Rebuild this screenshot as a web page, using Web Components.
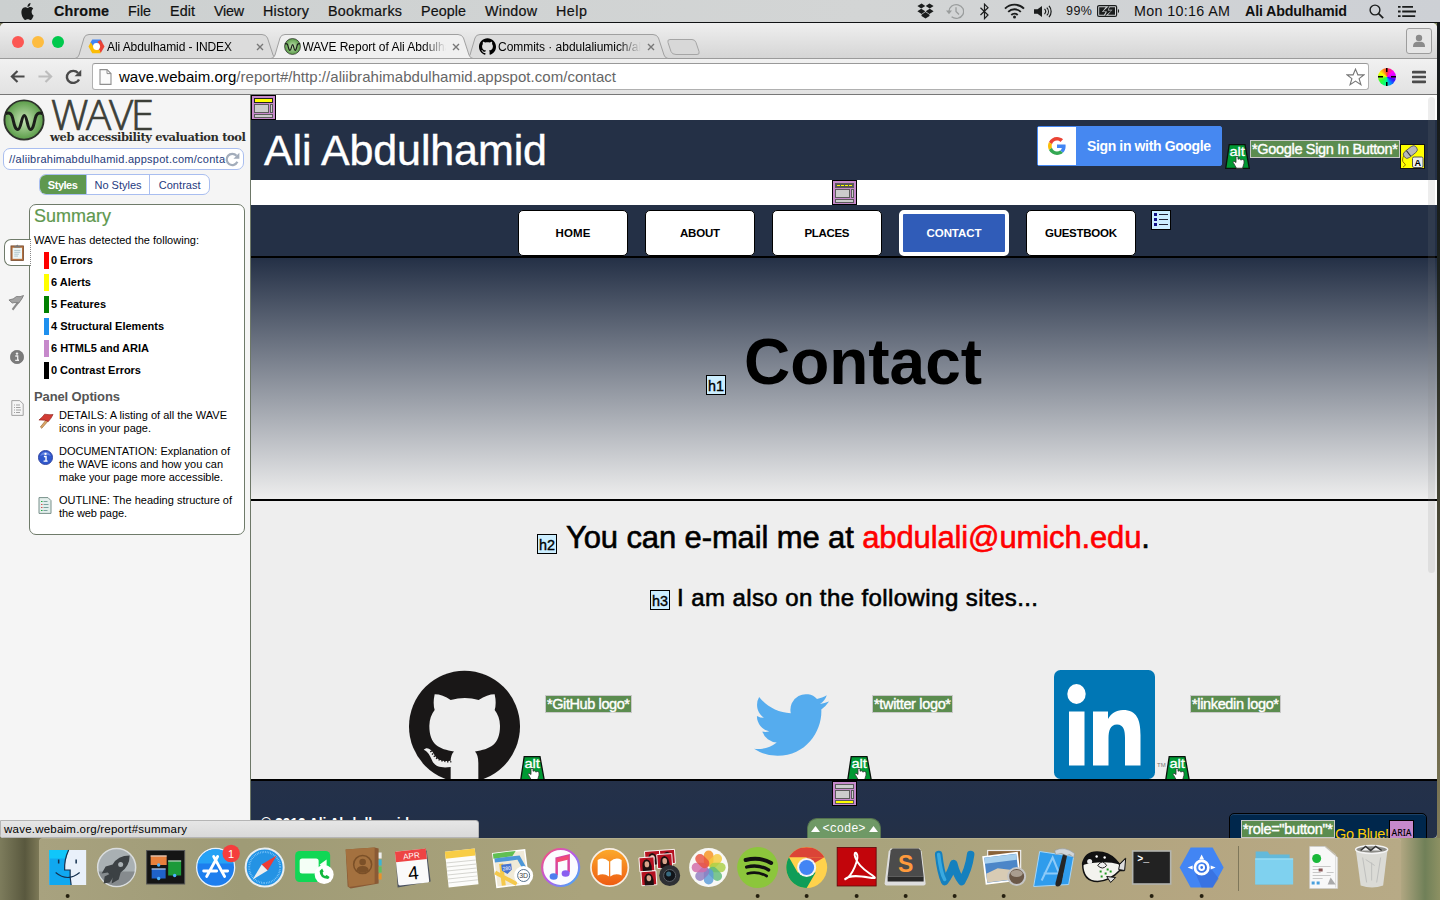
<!DOCTYPE html>
<html lang="en">
<head>
<meta charset="utf-8">
<title>WAVE Report of Ali Abdulhamid</title>
<style>
html,body{margin:0;padding:0;width:1440px;height:900px;overflow:hidden;font-family:"Liberation Sans",Arial,sans-serif}
</style>
</head>
<body>
<mac-desktop></mac-desktop>
<script>
const ICONS = {
apple:['0 0 24 24','<path fill="#1b1d1d" d="M12.152 6.896c-.948 0-2.415-1.078-3.96-1.04-2.04.027-3.91 1.183-4.961 3.014-2.117 3.675-.546 9.103 1.519 12.09 1.013 1.454 2.208 3.09 3.792 3.039 1.52-.065 2.09-.987 3.935-.987 1.831 0 2.35.987 3.96.948 1.637-.026 2.676-1.48 3.676-2.948 1.156-1.688 1.636-3.325 1.662-3.415-.039-.013-3.182-1.221-3.22-4.857-.026-3.04 2.48-4.494 2.597-4.559-1.429-2.09-3.623-2.324-4.39-2.376-2-.156-3.675 1.09-4.61 1.09zM15.53 3.83c.843-1.012 1.4-2.427 1.245-3.83-1.207.052-2.662.805-3.532 1.818-.78.896-1.454 2.338-1.273 3.714 1.338.104 2.715-.688 3.559-1.701"/>'],
dropbox:['0 0 17 16','<g fill="#1b1d1d"><path d="M4.6 .5 8.3 3 4.2 5.6.4 2.9zM12.4.5 8.7 3l4.1 2.6 3.8-2.7zM.4 8.2 4.2 5.7 8.3 8.3 4.6 10.9zM16.6 8.2 12.8 5.7 8.7 8.3l3.7 2.6zM4.5 11.7l4-2.6 4 2.6v1.2l-4 2.5-4-2.5z"/></g>'],
timemachine:['0 0 18 18','<g fill="none" stroke="#9a9d9d" stroke-width="1.3"><path d="M3 9a7.3 7.3 0 1 1 2.6 5.6"/><path d="M10 4.5V9l3 3.2"/></g><path d="M0 8h6l-3 4z" fill="#9a9d9d"/>'],
bluetooth:['0 0 11 17','<path d="M1.5 4.8 9 12 5.5 15.6V1.2L9 4.7 1.5 12" fill="none" stroke="#1b1d1d" stroke-width="1.2"/>'],
wifi:['0 0 21 16','<g fill="none" stroke="#1b1d1d" stroke-width="1.9"><path d="M1 5.6a13.4 13.4 0 0 1 19 0"/><path d="M4.2 8.9a8.9 8.9 0 0 1 12.6 0"/><path d="M7.3 12a4.5 4.5 0 0 1 6.4 0"/></g><circle cx="10.5" cy="14" r="1.5" fill="#1b1d1d"/>'],
sound:['0 0 18 14','<path d="M0 4.5h3.5L8 1v12L3.5 9.5H0z" fill="#1b1d1d"/><g fill="none" stroke="#1b1d1d" stroke-width="1.2"><path d="M10.5 4.3a4 4 0 0 1 0 5.4M12.8 2.7a6.5 6.5 0 0 1 0 8.6M15 1a9.5 9.5 0 0 1 0 12"/></g>'],
battery:['0 0 23 14','<rect x=".6" y="1.6" width="19" height="10.8" rx="1.5" fill="none" stroke="#1b1d1d" stroke-width="1.2"/><path d="M2.2 3.2h6.5L5 8h3.5L7 10.8H2.2zM18 10.8h-7l4.5-5h-4l1.3-2.6H18z" fill="#1b1d1d"/><path d="M12.5 1.5 6 7.4h4L7.5 12.6l7.3-6.1h-4z" fill="#1b1d1d"/><path d="M21 5v4c1.5-.5 1.5-3.5 0-4z" fill="#1b1d1d"/>'],
search:['0 0 15 15','<circle cx="6" cy="6" r="4.9" fill="none" stroke="#1b1d1d" stroke-width="1.4"/><path d="m9.6 9.6 4.6 4.6" stroke="#1b1d1d" stroke-width="1.7"/>'],
mlist:['0 0 18 12','<path d="M0 1h2.6M4.2 1H15M0 6h2.6M4.2 6H18M0 11h2.6M4.2 11h13" stroke="#1b1d1d" stroke-width="2"/>'],
gcloud:['0 0 18 18','<path d="M4.5 1.5h9l2 3.5h-4l-1 1h-3L4.5 9 2.5 5z" fill="#4285f4"/><path d="M13.5 2 17.5 9l-4 7-2.2-4 1.7-3-3-5z" fill="#ea4335"/><path d="M.5 9 3 4.5l2.3 4L9 12.5h3l1.5 3.7h-9z" fill="#fbbc05"/><circle cx="9" cy="9" r="3.6" fill="#fff"/>'],
wave:['0 0 42 42','<defs><radialGradient id="g"><stop offset="0" stop-color="#c5e3b4"/><stop offset="1" stop-color="#5a9c48"/></radialGradient></defs><circle cx="21" cy="21" r="19.6" fill="url(#g)" stroke="#2e322c" stroke-width="1.9"/><path d="M2.6 14.5c4.8-1.5 6.2 1 7.2 5 1.2 5 2.2 11 5 11 3.3 0 3.7-14 6.5-14s3 14 6.2 14c2.6 0 3.5-6 4.7-11 1-4 2.6-6.5 7.2-5" fill="none" stroke="#1b1e1a" stroke-width="3"/>'],
octo:['0 0 24 24','<path d="M12 .297c-6.63 0-12 5.373-12 12 0 5.303 3.438 9.8 8.205 11.385.6.113.82-.258.82-.577 0-.285-.01-1.04-.015-2.04-3.338.724-4.042-1.61-4.042-1.61C4.422 18.07 3.633 17.7 3.633 17.7c-1.087-.744.084-.729.084-.729 1.205.084 1.838 1.236 1.838 1.236 1.07 1.835 2.809 1.305 3.495.998.108-.776.417-1.305.76-1.605-2.665-.3-5.466-1.332-5.466-5.93 0-1.31.465-2.38 1.235-3.22-.135-.303-.54-1.523.105-3.176 0 0 1.005-.322 3.3 1.23.96-.267 1.98-.399 3-.405 1.02.006 2.04.138 3 .405 2.28-1.552 3.285-1.23 3.285-1.23.645 1.653.24 2.873.12 3.176.765.84 1.23 1.91 1.23 3.22 0 4.61-2.805 5.625-5.475 5.92.42.36.81 1.096.81 2.22 0 1.606-.015 2.896-.015 3.286 0 .315.21.69.825.57C20.565 22.092 24 17.592 24 12.297c0-6.627-5.373-12-12-12"/>'],
close:['0 0 8 8','<path d="m1 1 6 6M7 1 1 7" stroke="#777" stroke-width="1.4"/>'],
user:['0 0 26 26','<rect x=".5" y=".5" width="25" height="25" rx="2.5" fill="#e6e6e6" stroke="#9d9d9d"/><circle cx="13" cy="10" r="3.2" fill="#8b8b8b"/><path d="M7 19c0-5 3-5.2 6-5.2s6 .2 6 5.2z" fill="#8b8b8b"/>'],
back:['0 0 16 14','<path d="M8 1 2 7l6 6M2 7h13.5" fill="none" stroke="#4a4a4a" stroke-width="2.3"/>'],
fwd:['0 0 16 14','<path d="m8 1 6 6-6 6M14 7H.5" fill="none" stroke="#bdbdbd" stroke-width="2.3"/>'],
reload:['0 0 16 16','<path d="M13.2 10.5A6 6 0 1 1 12.3 4" fill="none" stroke="#4a4a4a" stroke-width="2.3"/><path d="M15.3.8v6.4H9z" fill="#4a4a4a"/>'],
refresh:['0 0 16 16','<path d="M13.2 10.5A6 6 0 1 1 12.3 4" fill="none" stroke="#a3adbb" stroke-width="2.4"/><path d="M15.3.8v6.4H9z" fill="#a3adbb"/>'],
doc:['0 0 13 16','<path d="M1 .6h7l4 4v10.8H1z" fill="#fbfbfb" stroke="#8f8f8f" stroke-width="1.1"/><path d="M8 .6v4h4" fill="none" stroke="#8f8f8f"/>'],
star:['0 0 20 19','<path d="m10 1.2 2.5 6h6.3l-5 4 1.9 6.4L10 13.8l-5.7 3.8 1.9-6.4-5-4h6.3z" fill="#fff" stroke="#777" stroke-width="1.2"/>'],
burger:['0 0 14 14','<path d="M1 2.2h12M1 7h12M1 11.8h12" stroke="#4b4b4b" stroke-width="2.7" stroke-linecap="round"/>'],
clip:['0 0 16 18','<rect x="1" y="2" width="13.5" height="15.5" fill="#b5713f" stroke="#70452a" stroke-width=".8"/><rect x="2.8" y="4" width="10" height="11.7" fill="#edf6f6"/><path d="M4.5 3.8V2h2L7.7.4 9 2h2v1.8z" fill="#777"/><path d="M4.5 6.8h6.5M4.5 8.8h6.5M4.5 10.8h5M4.5 12.8h4" stroke="#a9bfc4" stroke-width=".9"/>'],
flagG:['0 0 17 16','<path d="m10 6.500-6 7.500 1.600 1.400 6.500-8z" fill="#8c8c8c"/><path d="M1 5Q6 4.500 9 1.500q4 .8 7.500-1-1.500 3.500-5 7.500Q7 7 4.500 8z" fill="#a3a3a3" stroke="#6f6f6f" stroke-width=".8"/>'],
flagR:['0 0 17 16','<path d="m8.500 7-6 7 1.500 1.300 6.500-7z" fill="#dca96a" stroke="#8f5a25" stroke-width=".6"/><path d="M1 7Q5 4 7 1.200q5 .8 9 .3-2 4-5 7Q8 6.500 1 7z" fill="#d23c34" stroke="#962720" stroke-width=".7"/>'],
infoG:['0 0 14 14','<circle cx="7" cy="7" r="6.700" fill="#7b7b7b" stroke="#666" stroke-width=".6"/><path d="M5.300 6h2.400v4.200H9M5.200 10.400H9" stroke="#eee" stroke-width="1.300" fill="none"/><circle cx="7" cy="3.600" r="1.200" fill="#eee"/>'],
infoB:['0 0 14 14','<circle cx="7" cy="7" r="6.600" fill="#2f58cc" stroke="#2c3d9a" stroke-width=".8"/><path d="M2 5.500a5.300 5.300 0 0 1 10 0Q7 3.500 2 5.500z" fill="#7d9aee" opacity=".7"/><path d="M5.500 6h2v4.200M5.200 10.400H9" stroke="#fff" stroke-width="1.300" fill="none"/><circle cx="7" cy="3.600" r="1.100" fill="#fff"/>'],
outG:['0 0 13 16','<path d="M.8.600h8l3.400 3.400v11.400H.8z" fill="#f5f5f5" stroke="#999" stroke-width=".9"/><path d="M3 5h1M5 5h4M3 7.500h1M5 7.500h4.500M3 10h1M5 10h5M3 12.500h1M5 12.500h4" stroke="#999" stroke-width=".9"/>'],
outC:['0 0 14 17','<path d="M1 .600h9l3 3v12.800H1z" fill="#e4efec" stroke="#78908b" stroke-width="1"/><path d="M5.500 4.500h4M5.500 7.500h5M5.500 10.500h5M5.500 13.500h4" stroke="#7ba39f"/><path d="M3 4.500h1.500M3 13.500h1.500" stroke="#1faa3a"/><path d="M3 7.500h1.500M3 10.500h1.500" stroke="#d85050"/>'],
google:['0 0 48 48','<path fill="#EA4335" d="M24 9.500c3.540 0 6.710 1.220 9.210 3.600l6.850-6.850C35.900 2.380 30.470 0 24 0 14.620 0 6.510 5.380 2.560 13.220l7.980 6.190C12.430 13.720 17.740 9.500 24 9.500z"/><path fill="#4285F4" d="M46.980 24.550c0-1.570-.15-3.090-.38-4.550H24v9.020h12.940c-.58 2.960-2.260 5.480-4.780 7.180l7.730 6c4.510-4.180 7.090-10.360 7.090-17.650z"/><path fill="#FBBC05" d="M10.530 28.590c-.48-1.450-.76-2.990-.76-4.590s.27-3.140.76-4.590l-7.980-6.190C.92 16.460 0 20.120 0 24c0 3.880.92 7.540 2.560 10.780l7.970-6.190z"/><path fill="#34A853" d="M24 48c6.480 0 11.930-2.130 15.890-5.810l-7.730-6c-2.150 1.450-4.920 2.300-8.160 2.300-6.260 0-11.570-4.220-13.470-9.910l-7.980 6.190C6.510 42.620 14.620 48 24 48z"/>'],
alt:['0 0 25 25','<path d="M4.200.7h15.800l4.300 23.600H.7z" fill="#009933" stroke="#0a120c" stroke-width="1.300"/><text x="12.200" y="12" font-size="13" text-anchor="middle" fill="#fff" stroke="#fff" stroke-width=".3" textLength="15.500" lengthAdjust="spacingAndGlyphs">alt</text><path d="M11 12.500v6l-2-1.300-1 1 3.500 6h6l1.500-5v-3l-1.500-.7-1.600.5-1.400-1.200-1.500.4V12.500z" fill="#fff" stroke="#333" stroke-width=".8"/>'],
mouse:['0 0 25 25','<rect x=".5" y=".5" width="24" height="24" fill="#ff0" stroke="#111"/><path d="M4 11Q1 17 4 19t-1 4" fill="none" stroke="#987b00" stroke-width="1"/><g transform="rotate(-38 10 8)"><rect x="2.500" y="4.500" width="15.500" height="7.500" rx="3.700" fill="#b9b9b9" stroke="#555" stroke-width=".8"/><path d="M8 4.700v7" stroke="#333"/></g><rect x="12.500" y="13" width="10.500" height="10.500" rx="1.500" fill="#eee" stroke="#555"/><text x="17.800" y="21.600" font-size="9" font-weight="700" text-anchor="middle">A</text>'],
head:['0 0 25 25','<rect x=".5" y=".5" width="24" height="24" fill="#c689cb" stroke="#000"/><g fill="#ccc" stroke="#5b5b5b"><rect x="3.500" y="3.500" width="18" height="4" fill="#ff0" stroke="#222"/><rect x="3.500" y="9.500" width="14" height="8"/><rect x="19.500" y="9.500" width="2" height="8"/><rect x="3.500" y="19.500" width="18" height="3"/></g>'],
navi:['0 0 25 25','<rect x=".5" y=".5" width="24" height="24" fill="#c689cb" stroke="#000"/><g fill="#ccc" stroke="#5b5b5b"><rect x="3.500" y="3.500" width="18" height="4" fill="#555"/><path d="M5 5.500h15" stroke="#ff0" stroke-dasharray="3 1"/><rect x="3.500" y="9.500" width="14" height="8"/><rect x="19.500" y="9.500" width="2" height="8"/><rect x="3.500" y="19.500" width="18" height="3"/></g>'],
foot:['0 0 25 25','<rect x=".5" y=".5" width="24" height="24" fill="#c689cb" stroke="#000"/><g fill="#ccc" stroke="#5b5b5b"><rect x="3.500" y="3.500" width="18" height="4"/><rect x="3.500" y="9.500" width="14" height="8"/><rect x="19.500" y="9.500" width="2" height="8"/><rect x="3.500" y="19.500" width="18" height="3" fill="#ff0"/></g>'],
ulist:['0 0 20 20','<rect x=".5" y=".5" width="19" height="19" fill="#cef" stroke="#000"/><path d="M3 4.500h3M3 9.500h3M3 14.500h3" stroke="#118" stroke-width="3"/><path d="M8 4.500h9M8 9.500h9M8 14.500h9" stroke="#223"/>'],
github:['27 60 333 328','<ellipse cx="193.500" cy="230" rx="166.500" ry="168" fill="#191717"/><path fill="#eee" d="M104 133Q128 133 152 150Q195 139 236 150Q262 133 284 133Q290 160 284 180Q300 200 300 228C300 285 270 299 225 305Q235 315 235 340V400H152V352C125 355 108 352 98 336C90 318 84 305 71 300C80 290 94 296 103 315C112 332 130 336 152 333Q152 315 162 305C118 299 88 285 88 228Q88 200 104 180Q98 160 104 133z"/><path d="M92 303c12 23 26 33 62 33" fill="none" stroke="#191717" stroke-width="5" stroke-dasharray="4 5"/>'],
twitter:['0 2.200 24 19.600','<path fill="#55acee" d="M23.953 4.570a10 10 0 01-2.825.775 4.958 4.958 0 002.163-2.723c-.951.555-2.005.959-3.127 1.184a4.920 4.920 0 00-8.384 4.482C7.690 8.095 4.067 6.130 1.640 3.162a4.822 4.822 0 00-.666 2.475c0 1.710.87 3.213 2.188 4.096a4.904 4.904 0 01-2.228-.616v.060a4.923 4.923 0 003.946 4.827 4.996 4.996 0 01-2.212.085 4.936 4.936 0 004.604 3.417 9.867 9.867 0 01-6.102 2.105c-.39 0-.779-.023-1.170-.067a13.995 13.995 0 007.557 2.209c9.053 0 13.998-7.496 13.998-13.985 0-.21 0-.42-.015-.63A9.935 9.935 0 0024 4.590z"/>'],
linkedin:['0 0 101 109','<rect width="101" height="109" rx="6.500" fill="#0077b5"/><g fill="#fff"><ellipse cx="22.500" cy="24" rx="9.200" ry="10"/><rect x="15" y="41.500" width="15.500" height="54"/><path d="M39 41.500h15v7.500c3-5.500 8-9 15-9 14 0 17.500 10 17.500 25v30.500H71V68c0-7-1-13.500-8-13.500S54.500 61 54.500 68v27.500H39z"/></g>'],
aria:['0 0 25 25','<rect x=".5" y=".5" width="24" height="24" fill="#c689cb" stroke="#000"/><text x="12.500" y="16" font-family="Noto Sans" font-size="9.500" font-weight="500" text-anchor="middle" textLength="20" lengthAdjust="spacingAndGlyphs">ARIA</text>'],
tri:['0 0 9 7','<path d="M4.500 0 9 7H0z" fill="#fff"/>'],
};
['h1','h2','h3'].forEach(h=>ICONS[h]=['0 0 20 20',`<rect x=".5" y=".5" width="19" height="19" fill="#cef" stroke="#000"/><text x="10" y="16" font-size="15.500" text-anchor="middle" textLength="16" lengthAdjust="spacingAndGlyphs" stroke="#000" stroke-width=".4">${h}</text>`]);

/* Dock tiles are drawn round their own centre. */
const petals=['#f7931e','#f5c93a','#a9cf46','#5fb97a','#5a9bd8','#8f7cc0','#d16aa8','#e8523f'].map((c,i)=>`<rect x="-4.800" y="-17" width="9.600" height="16" rx="4.800" fill="${c}" opacity=".82" transform="rotate(${i*45})"/>`).join('');
const photo=(x,y)=>`<rect x="${x}" y="${y}" width="15" height="14" fill="#b51220" stroke="#fff" stroke-width=".9"/><path d="M${x+3} ${y+14}q-1-12 4.500-12 5.500 1 4.500 12z" fill="#1c1010"/><ellipse cx="${x+7.500}" cy="${y+7}" rx="2.300" ry="3" fill="#d9a58c"/>`;
const DOCK = {
finder:'<rect x="-18.500" y="-17.500" width="37" height="35" fill="#e9f0fa"/><path d="M-18.500-17.500H1Q-3.500-8-3 2.500H2.500Q2 9 3.500 17.500h-22z" fill="#10a8f0"/><path d="M-18.500-17.500H1L-1.500-9h-17z" fill="#10c6fa"/><path d="M-9-8v4M8.500-8v4" stroke="#15304f" stroke-width="1.500"/><path d="M-12 5Q0 15 12 5M1-17.500Q-3.500-8-3 2.500H2.500Q2 9 3.500 17.500" fill="none" stroke="#15304f" stroke-width="1.200"/>',
launch:'<circle r="19" fill="#a9b0b3" stroke="#dadddd" stroke-width="1.500"/><path d="M-18 4A18.500 18.500 0 0 0 18 4z" fill="#868b8e"/><path d="M13-12Q1-12-4-3l-7 2-4 7 6-1 5 5-1 6 7-4 2-7Q13-1 13-12z" fill="#3c4144"/><circle cx="4" cy="-3" r="2.500" fill="#a9b0b3"/><path d="m-6 6-6 3-1 7 6-1 4-6z" fill="#3c4144"/>',
mission:'<rect x="-19" y="-17" width="38" height="33.500" fill="#151515" stroke="#555"/><rect x="-15" y="-12" width="16" height="9.500" fill="#e8803c"/><rect x="2.500" y="-7" width="13" height="15" fill="#1c9a39"/><rect x="-14" y="1" width="14" height="10" fill="#1f62c9"/><path d="M-15-11.500H1M2.500-6.500h13M-14 1.500H0" stroke="#ddd"/><circle cx="-7" cy="-2.500" r="1.700" fill="#4cb3ff"/><circle cx="9" cy="8" r="1.700" fill="#4cb3ff"/><circle cx="-7" cy="11" r="1.700" fill="#4cb3ff"/>',
store:'<circle r="19" fill="#1d7eee" stroke="#e8f2fb" stroke-width="1.300"/><path d="M-18-4A18.500 18.500 0 0 1 18-4z" fill="#25a2f5"/><g stroke="#fff" stroke-width="2.800" stroke-linecap="round"><path d="m2-11-11 20M-2-11 9 9M-12 3.500H1M8 3.500h4"/></g><circle cx="15.500" cy="-14" r="8.700" fill="#f53d3d"/><text x="15.500" y="-9.800" font-size="11" fill="#fff" text-anchor="middle">1</text>',
safari:'<circle r="19" fill="#2493e4" stroke="#e9eef0" stroke-width="2"/><circle r="15.500" fill="none" stroke="#8fd0ff" stroke-width="2" stroke-dasharray=".6 1.100"/><path d="m12-12-15 9 6 6z" fill="#ee3b35"/><path d="m-12 12 9-15 6 6z" fill="#eee"/>',
facetime:'<rect x="-18.500" y="-16.500" width="35" height="31" rx="4.500" fill="#10d755"/><rect x="-14" y="-9" width="19" height="15" rx="2.500" fill="#f4fff6"/><path d="m6-3 7-5V5z" fill="#f4fff6"/><circle cx="10.500" cy="7" r="9.500" fill="#fff"/><path d="M6 3.500q0 7.500 8.500 8l1.500-2-3-2-1.500 1Q9 7.500 9 5l1-1-1.500-3z" fill="#10b83c"/>',
contacts:'<path d="m-18-18 29-2 4 1v35l-28 5-3-2z" fill="#8a5a35"/><path d="m-18-18 29-2v36l-26 3.500z" fill="#a4713f"/><path d="M15-15h3v6h-3z" fill="#eee"/><path d="M15-8h3v6h-3z" fill="#3ab5d8"/><path d="M15-1h3v6h-3z" fill="#60c060"/><path d="M15 6h3v6h-3z" fill="#e8932c"/><circle cx="-1" cy="-3" r="9" fill="none" stroke="#7b5028" stroke-width="1.500"/><circle cx="-1" cy="-5.500" r="3.300" fill="#7b5028"/><path d="M-7 3q0-4.500 6-4.500T5 3q-6 4.500-12 0z" fill="#7b5028"/>',
calendar:'<path d="m-17-12 31-5 4 31-33 6z" fill="#4b5260"/><g transform="rotate(-6)"><rect x="-16" y="-17.500" width="31" height="34" rx="1.500" fill="#fafafa"/><path d="M-16-17.500h31V-7h-31z" fill="#ee4444"/><text y="-9" font-size="8" fill="#fff" text-anchor="middle">APR</text><text y="12" font-size="19" text-anchor="middle">4</text></g>',
notes:'<g transform="rotate(-6)"><rect x="-15" y="-17.500" width="30" height="36" fill="#fcfcfa"/><path d="M-15-17.500h30v7h-30z" fill="#f8cd45"/><path d="M-15-6h30M-15-2h30M-15 2h30M-15 6h30M-15 10h30M-15 14h30" stroke="#d5d5d0"/></g>',
maps:'<g transform="rotate(-7)"><rect x="-17" y="-16" width="32" height="34" fill="#f0ead8" stroke="#fff" stroke-width="1.500"/><path d="M-17-16h23l-4 5h-19z" fill="#60bf52"/><path d="M-16-9H8l5 12" fill="none" stroke="#4c97d8" stroke-width="4"/><path d="M-17 3 3 17M-10-5v22" stroke="#f5c94c" stroke-width="4"/><path d="M-10-4H0v6l-5 4-5-4z" fill="#4774cf"/><text x="-5" y="2" font-size="5" fill="#fff" text-anchor="middle">280</text></g><circle cx="12" cy="8" r="9.500" fill="#fff"/><circle cx="12" cy="8" r="6" fill="none" stroke="#58728c"/><text x="12" y="10.500" font-size="7" text-anchor="middle" fill="#444">3D</text>',
itunes:'<defs><linearGradient id="r" x2="1" y2="1"><stop stop-color="#ff4f6e"/><stop offset=".5" stop-color="#b65bea"/><stop offset="1" stop-color="#34b6f7"/></linearGradient></defs><circle r="18.500" fill="#fbfbff" stroke="url(#r)" stroke-width="2.200"/><path d="M-4 8V-9l12-3V5" fill="none" stroke="#d8459f" stroke-width="2.500"/><path d="m-4-9 12-3v4L-4-5z" fill="#f24a77"/><ellipse cx="-7" cy="9" rx="4" ry="3.300" fill="#4e7dee"/><ellipse cx="5" cy="6" rx="4" ry="3.300" fill="#8a5ef0"/>',
ibooks:'<defs><linearGradient id="b" x2="0" y2="1"><stop stop-color="#fcab2c"/><stop offset="1" stop-color="#ee5a12"/></linearGradient></defs><circle r="18.700" fill="url(#b)" stroke="#f7efe6" stroke-width="1.700"/><path d="M-.6-6Q-6-11-12-7.500V8Q-6 5-.6 9zM.6-6Q6-11 12-7.500V8Q6 5 .6 9z" fill="#fff"/>',
booth:`<g transform="rotate(-4)">${photo(-13,-17)}${photo(2,-17)}${photo(-19,-11)}${photo(-1,-13)}${photo(-18,3)}</g><circle cx="11" cy="8" r="10.500" fill="#2e3034"/><circle cx="11" cy="8" r="6" fill="#12151a" stroke="#5a5f66"/><circle cx="10" cy="6.500" r="2.500" fill="#386a80"/>`,
photos:`<circle r="19.500" fill="#f8f8f6"/>${petals}`,
spotify:'<circle r="20.500" fill="#8cc63c"/><g fill="none" stroke="#111" stroke-linecap="round"><path d="M-12-7.500Q2-11 13.500-4.500" stroke-width="4"/><path d="M-11-.5Q1-3.500 11 2.500" stroke-width="3.300"/><path d="M-10 6Q0 3.500 9 8.500" stroke-width="2.700"/></g>',
chrome:'<circle r="20.500" fill="#ffd24c"/><path d="M-17.700-10.200A20.500 20.500 0 0 1 17.700-10.200H0z" fill="#db4437"/><path d="M-17.700-10.200A20.500 20.500 0 0 0 0 20.500L9 5-9 5z" fill="#0f9d58"/><path d="M17.700-10.200H0V0z" fill="#db4437"/><circle r="9.500" fill="#f3f3f3"/><circle r="7.500" fill="#4285f4"/>',
acrobat:'<rect x="-19.500" y="-20" width="39" height="38.500" fill="#c2050b" stroke="#5d0508" stroke-width=".8"/><path d="M-12 12C-4 9 3-10 0-14S-5-6 13 6s-16-4-25 6z" fill="none" stroke="#fff" stroke-width="2"/>',
sublime:'<path d="m-17-16 2-3h29l2 3 4 32q0 2-2 2h-37q-2 0-2-2z" fill="#dedede"/><path d="m-15-17 2-2h26l2 2 3 26h-36z" fill="#4b4b4b"/><path d="M-18 9h36v5h-36z" fill="#292929"/><text y="4" font-size="23" font-weight="700" fill="#ff9a3c" text-anchor="middle">S</text>',
word:'<path d="M-16-13Q-14 5-10 14 -5 8-1-4 2 8 7 14 14 2 16-13" fill="none" stroke="#1580be" stroke-width="7.500" stroke-linejoin="round" stroke-linecap="round"/><path d="M-16-13Q-14 5-10 12" fill="none" stroke="#3aa9e0" stroke-width="3.500" stroke-linecap="round"/>',
preview:'<rect x="-16" y="-17" width="33" height="28" fill="#8a6238" stroke="#eee" stroke-width="1.200"/><g transform="rotate(-7)"><rect x="-19" y="-13" width="34" height="27" fill="#4c86c8" stroke="#fff" stroke-width="1.800"/><path d="M-18-12h32v6h-32z" fill="#a8d0ee"/><path d="m-18 4 12-4 20 5v8h-32z" fill="#d8cbb4"/></g><circle cx="13" cy="9" r="8.500" fill="#6b5848" stroke="#c5c5c5" stroke-width="2"/><ellipse cx="13" cy="6" rx="6" ry="3.500" fill="#a99d90"/>',
xcode:'<path d="m-14-16 34 5-5 28-35 2z" fill="#2f9cec" stroke="#a4d6fa"/><path d="m-12 13 11-23L8 12M-10 6H10" fill="none" stroke="#8dcaf8" stroke-width="2"/><path d="m10-16-8 31q-1 4 2 4t4-4l6-30z" fill="#252525"/><path d="M1-17q10-5 20 3l-1 4-4-3-3 1-5-2-6 1z" fill="#d0d5d9" stroke="#8d9498" stroke-width=".6"/>',
fish:'<path d="M-20-4Q-17-18 0-15 10-13 17-3l5-5-1 11-4 0Q8 13-5 14-20 14-20-4z" fill="#f3f3ee" stroke="#111" stroke-width="1.500"/><path d="M-20-4Q-17-18 0-15 10-13 17-3 7-6-5-5T-20-2z" fill="#111"/><path d="m4 9 9 1-5 5zM17-3l6-6-1 12-6-1z" fill="#ddd" stroke="#111"/><circle cx="-13" cy="-6" r="2.500" fill="#eee"/><path d="M-5-2q5-7 9 0-4 5-9 0z" fill="#eee" stroke="#222"/><circle cx="2" cy="-10" r="1.200" fill="#fff"/><circle cx="-6" cy="-11" r="1.200" fill="#fff"/><path d="M-3 4h2M2 6h2M4 2h2M-2 9h2M7 4h2" stroke="#292" stroke-width="2"/>',
term:'<rect x="-19" y="-16.500" width="38" height="33" fill="#222" stroke="#b3b5b0" stroke-width="1.600"/><text x="-14.500" y="-5.500" font-family="Liberation Mono" font-size="10" font-weight="700" fill="#fff">&gt;_</text>',
gce:'<path d="M-11-20h22L22 0 11 20h-22L-22 0z" fill="#4285f4"/><path d="m4-6 13 17-6 9H0L-6 6z" fill="#3367d6" opacity=".6"/><circle r="6.700" fill="none" stroke="#fff" stroke-width="2.700"/><circle r="2.400" fill="none" stroke="#fff" stroke-width="2"/><path d="m0-13 2.500 5h-5zM-14 0l5-2v4zM14 0l-5-2v4z" fill="#fff"/>',
folder:'<path d="M-18-16h12l2 3h20v30h-34z" fill="#63b9da"/><path d="M-18.500-9h38v26h-38z" fill="#7fd1ef"/><path d="M-18.500-8.500h38" stroke="#a4e3f8"/>',
docs:'<path d="M-13-21h15l13 11v31h-28z" fill="#f8f8f8" stroke="#cfcfcf" stroke-width=".6"/><path d="M-9-21H3l10 8v33" fill="none" stroke="#ccc" stroke-width=".7"/><circle cx="-6" cy="-9" r="4.500" fill="#19b83a"/><path d="M-10-1H8M-10 2h8M-10 5h8M4 5h7M-10 8h18M-10 11h10" stroke="#bbb" stroke-width=".8"/><path d="M-4 1h4v3h-4z" fill="#855"/><path d="M-11 14h3v3h-3zM-6 14h3v3h-3z" fill="#49a0dd"/><path d="m5 17 3-7 5 7z" fill="#aaa"/>',
trash:'<path d="M-16-19h32L11.500 18q-11 4-22.500 0z" fill="#dedfdd" opacity=".93"/><ellipse cy="-18" rx="16" ry="4" fill="#8d8d88" stroke="#f3f3f3" stroke-width="1.500"/><path d="m-11-17 5-4 5 4 5-4 6 4" fill="#f3f3f3" stroke="#333" stroke-width="1.500"/><path d="M-9-10-5 15M0-5v18M9-10 5 15M-6-8 3-2" stroke="#bfc0be" stroke-width="1"/>',
};

function define(name, css, html, after){
  const t=document.createElement('template');
  t.innerHTML=`<style>*{box-sizing:border-box}${css}</style>${html}`;
  customElements.define(name,class extends HTMLElement{
    constructor(){super();this.attachShadow({mode:'open'}).append(t.content.cloneNode(true));}
    connectedCallback(){after&&after(this,this.shadowRoot);}
  });
}

define('mac-desktop',`:host{display:flex;flex-direction:column;width:1440px;height:900px;position:relative;overflow:hidden;background:linear-gradient(90deg,#7d7c5c 0,#59583e 25px,#8c8762 45px,#a09b72 50%,#b3a883 1400px,#708058 1425px,#8d9163 1440px)}
.edge{width:3px;height:815px;background:linear-gradient(#15181b,#1c211d 30%,#4e4c39 65%,#827c59)}
.mid{display:flex;height:815px}`,
`<mac-menubar></mac-menubar><div class="mid"><browser-window></browser-window><div class="edge"></div></div><mac-dock></mac-dock>`);

define('mac-menubar',`:host{display:flex;align-items:center;height:23px;background:linear-gradient(90deg,#ccd0d0,#d3d5d5 60%,#cdd0d5);border-bottom:1px solid #101214;font-size:14.300px;color:#111;padding-left:20px;flex:none}
nav{display:flex;gap:19px;-webkit-text-stroke:.2px #111}.r{margin-left:auto;display:flex;align-items:center;width:523px}`,
`<nav><ui-icon n="apple" w="15" h="17"></ui-icon><t-fit w="55" style="font-weight:700">Chrome</t-fit><t-fit w="23">File</t-fit><t-fit w="25">Edit</t-fit><t-fit w="30">View</t-fit><t-fit w="46">History</t-fit><t-fit w="74">Bookmarks</t-fit><t-fit w="45">People</t-fit><t-fit w="52">Window</t-fit><t-fit w="31">Help</t-fit></nav>
<div class="r"><ui-icon n="dropbox" w="17" h="16"></ui-icon><ui-icon n="timemachine" w="18" h="17" style="margin-left:12px"></ui-icon><ui-icon n="bluetooth" w="11" h="17" style="margin-left:15px"></ui-icon><ui-icon n="wifi" w="21" h="16" style="margin-left:14px"></ui-icon><ui-icon n="sound" w="18" h="13" style="margin-left:9px"></ui-icon><t-fit w="26" style="margin-left:14px;font-size:12.500px">99%</t-fit><ui-icon n="battery" w="23" h="14" style="margin-left:5px"></ui-icon><t-fit w="96" style="margin-left:14px">Mon 10:16 AM</t-fit><t-fit w="102" style="margin-left:15px;font-weight:700">Ali Abdulhamid</t-fit><ui-icon n="search" w="15" h="15" style="margin-left:22px"></ui-icon><ui-icon n="mlist" w="18" h="11" style="margin-left:14px"></ui-icon></div>`);

define('browser-window',`:host{display:flex;flex-direction:column;width:1437px;height:815px;background:#f5f5f5;border-radius:5px 5px 4px 4px;overflow:hidden;position:relative}
.strip{height:36px;display:flex;background:linear-gradient(#efefef,#d5d5d5);padding-left:12px;position:relative;border-bottom:1px solid #9b9b9b;flex:none}
.lights{display:flex;gap:8px;padding-top:13px;width:63px}.lights i{width:12px;height:12px;border-radius:50%}
.tabs{display:flex;padding-top:11px}
.bar{height:36px;display:flex;align-items:center;background:linear-gradient(#f1f1f1,#e2e2e2);border-bottom:1px solid #777;padding-left:10px;flex:none}
.omni{width:1277px;height:27px;margin-left:10px;border:1px solid #b0b0b0;border-top-color:#999;border-radius:3px;background:#fff;display:flex;align-items:center;padding:0 3px 0 6px;font-size:15px;color:#666}
.omni b{font-weight:400;color:#000}.omni ui-icon:last-child{margin-left:auto}
.wheel{width:18px;height:18px;border-radius:50%;margin-left:9px;background:conic-gradient(#f33,#f0f 50deg,#c0f 85deg,#40f 110deg,#08f 150deg,#0f8 190deg,#3f3 240deg,#ff0 300deg,#f33)}
.wheel::after{content:"";display:block;width:18px;height:18px;background:linear-gradient(#000,#000) 50% 0/1.500px 4px no-repeat,linear-gradient(#000,#000) 50% 100%/1.500px 4px no-repeat,linear-gradient(#000,#000) 0 50%/5px 1.500px no-repeat,linear-gradient(#000,#000) 100% 50%/5px 1.500px no-repeat}
.view{display:flex;flex:1;min-height:0}
.status{position:absolute;left:0;bottom:0;width:479px;height:18px;background:linear-gradient(#e6e6e6,#d9d9d9);border:1px solid #b5b5b5;border-radius:0 3px 0 0;font-size:11.500px;line-height:17px;padding-left:3px;color:#000}
.code{position:absolute;left:807px;bottom:0;width:74px;height:20px;background:#6f9966;border:1px solid #55724f;border-bottom:0;border-radius:10px 10px 0 0;display:flex;align-items:center;justify-content:center;gap:3px;color:#fff;font:12px "Liberation Mono",monospace}
.sb{position:absolute;left:1428px;top:74px;width:7px;height:476px;border-radius:4px;background:rgba(128,128,128,.14)}
.nt{margin:5px 0 0 4px}.user{margin:5px 5px 0 auto}`,
`<div class="strip"><div class="lights"><i style="background:#fc5753"></i><i style="background:#fdbc40"></i><i style="background:#00c94d"></i></div>
<div class="tabs"><browser-tab icon="gcloud" tw="125">Ali Abdulhamid - INDEX</browser-tab><browser-tab icon="wave" active tw="168">WAVE Report of Ali Abdulhamid</browser-tab><browser-tab icon="octo" tw="155">Commits · abdulaliumich/aliib</browser-tab><svg class="nt" width="34" height="16"><path d="M4 .5h22q3 0 4 3l3 9q1 3-2 3H10q-4 0-5-3l-3-9q-1-3 2-3z" fill="#d8d8d8" stroke="#a5a5a5"/></svg></div><ui-icon class="user" n="user" w="26" h="26"></ui-icon></div>
<div class="bar"><ui-icon n="back" w="15" h="13"></ui-icon><ui-icon n="fwd" w="15" h="13" style="margin-left:13px"></ui-icon><ui-icon n="reload" w="17" h="16" style="margin-left:12px"></ui-icon>
<div class="omni"><ui-icon n="doc" w="13" h="16"></ui-icon><t-fit w="497" style="margin-left:7px"><b>wave.webaim.org</b>/report#/http://aliibrahimabdulhamid.appspot.com/contact</t-fit><ui-icon n="star" w="19" h="18"></ui-icon></div>
<div class="wheel"></div><ui-icon n="burger" w="14" h="14" style="margin-left:16px"></ui-icon></div>
<div class="view"><wave-sidebar></wave-sidebar><site-page></site-page></div>
<div class="sb"></div><div class="status"><t-fit w="183">wave.webaim.org/report#summary</t-fit></div><div class="code"><ui-icon n="tri" w="9" h="6"></ui-icon><t-fit w="43">&lt;code&gt;</t-fit><ui-icon n="tri" w="9" h="6"></ui-icon></div>`);

define('browser-tab',`:host{display:block;width:202px;height:25px;margin-right:-6.500px;position:relative;flex:none;font-size:12px}
:host([active]){z-index:2}svg{position:absolute;left:0;top:0}
.row{position:relative;display:flex;align-items:center;height:25px;padding-left:13px}
.c{width:143px;margin-left:2px;overflow:hidden;-webkit-mask-image:linear-gradient(90deg,#000 120px,transparent 143px)}.x{margin-left:6px}`,
`<svg width="202" height="25"><path d="M0 24.500Q3 24 4 21L9 4Q10 .5 14 .5H187Q191 .5 192.500 4L198 21Q199 24 202 24.500z" stroke="#a0a0a0"/></svg><div class="row"><span id="i"></span><div class="c"><t-fit id="t"><slot></slot></t-fit></div><ui-icon class="x" n="close" w="8" h="8"></ui-icon></div>`,
(h,s)=>{const a=h.hasAttribute('active');s.querySelector('path').setAttribute('fill',a?'#f0f0f0':'#dcdcdc');
 s.getElementById('i').outerHTML=`<ui-icon n="${h.getAttribute('icon')}" w="17" h="17"></ui-icon>`;
 const t=s.getElementById('t');t.dataset.text=h.textContent;t.setAttribute('w',h.getAttribute('tw'));});

define('wave-sidebar',`:host{display:flex;flex-direction:column;width:251px;background:#f5f5f5;border-right:1px solid #6d7767;flex:none;font-size:11px;color:#000}
.logo{display:flex;height:52px;padding:4px 0 0 3px}.words{display:flex;flex-direction:column;margin-left:6px}
.wv{font:300 42px/34px "Open Sans";color:#3c3f38;margin-top:-2px;-webkit-text-stroke:.7px #3c3f38}
.tag{font:700 11.500px/13px "DejaVu Serif";color:#2d2d2a;margin:0 0 0 -1px}
.url{display:flex;align-items:center;width:241px;height:22px;margin:1px 0 0 3px;border:1px solid #a9bef0;border-radius:7px;background:#fff;color:#243a7a;padding-left:5px}
.seg{display:flex;width:171px;height:21px;margin:4px 0 0 39px;border:1px solid #a9bef0;border-radius:7px;background:#fff;color:#1f3a80;overflow:hidden}
.seg div{display:flex;align-items:center;justify-content:center;border-left:1px solid #a9bef0}.seg div:first-child{border:0;background:#5f984f;color:#fff;font-weight:700}
.body{display:flex;margin-top:9px;height:331px}.tabs{width:29px;display:flex;flex-direction:column;align-items:flex-end;padding-top:35px;position:relative}
.on{width:27px;height:27px;margin-right:-2px;border:1px solid #6f7b6a;border-right:1px dotted #888;border-radius:7px 0 0 7px;background:#fff;display:flex;align-items:center;justify-content:center;position:relative;z-index:1}
.tabs ui-icon.o{margin-right:5px}
.panel{width:216px;background:#fff;border:1px solid #6f7b6a;border-radius:7px;padding-left:4px}
h2{margin:0;font-size:18px;font-weight:400;line-height:22px;color:#5f984f;-webkit-text-stroke:.2px #5f984f}
p{margin:6px 0 2px;line-height:14px}h3{margin:8px 0 0;font-size:13px;color:#555;line-height:16px}
.op{display:flex;align-items:center;line-height:13px}.op ui-icon{margin:0 5px 3px 4px;width:16px}.op div{display:flex;flex-direction:column}`,
`<div class="logo"><ui-icon n="wave" w="42" h="42"></ui-icon><div class="words"><t-fit class="wv" w="103">WAVE</t-fit><t-fit class="tag" w="196">web accessibility evaluation tool</t-fit></div></div>
<div class="url"><t-fit w="216">//aliibrahimabdulhamid.appspot.com/conta</t-fit><ui-icon n="refresh" w="15" h="15"></ui-icon></div>
<div class="seg"><div style="width:46px"><t-fit w="30">Styles</t-fit></div><div style="width:64px"><t-fit w="47">No Styles</t-fit></div><div style="width:60px"><t-fit w="42">Contrast</t-fit></div></div>
<div class="body"><div class="tabs"><div class="on"><ui-icon n="clip" w="15" h="17"></ui-icon></div><ui-icon class="o" n="flagG" w="16" h="16" style="margin-top:29px"></ui-icon><ui-icon class="o" n="infoG" w="14" h="14" style="margin-top:39px"></ui-icon><ui-icon class="o" n="outG" w="13" h="16" style="margin-top:36px"></ui-icon></div>
<div class="panel"><h2><t-fit w="77">Summary</t-fit></h2><p><t-fit w="165">WAVE has detected the following:</t-fit></p>
<count-row c="#f00" w="42">0 Errors</count-row><count-row c="#ff0" w="40">6 Alerts</count-row><count-row c="#008000" w="55">5 Features</count-row><count-row c="#1e90ee" w="113">4 Structural Elements</count-row><count-row c="#c689cb" w="98">6 HTML5 and ARIA</count-row><count-row c="#000" w="90">0 Contrast Errors</count-row>
<h3><t-fit w="86">Panel Options</t-fit></h3>
<div class="op" style="margin-top:4px"><ui-icon n="flagR" w="16" h="16"></ui-icon><div><t-fit w="168">DETAILS: A listing of all the WAVE</t-fit><t-fit w="92">icons in your page.</t-fit></div></div>
<div class="op" style="margin-top:10px"><ui-icon n="infoB" w="15" h="15" style="margin-bottom:14px"></ui-icon><div><t-fit w="171">DOCUMENTATION: Explanation of</t-fit><t-fit w="164">the WAVE icons and how you can</t-fit><t-fit w="164">make your page more accessible.</t-fit></div></div>
<div class="op" style="margin-top:10px"><ui-icon n="outC" w="14" h="17"></ui-icon><div><t-fit w="173">OUTLINE: The heading structure of</t-fit><t-fit w="68">the web page.</t-fit></div></div>
</div></div>`);

define('count-row',`:host{display:flex;align-items:center;height:22px;padding-left:10px;font-weight:700;font-size:11px}i{width:5px;height:17px;margin-right:2px}`,`<i></i><t-fit id="t"><slot></slot></t-fit>`,
(h,s)=>{s.querySelector('i').style.background=h.getAttribute('c');const t=s.getElementById('t');t.dataset.text=h.textContent;t.setAttribute('w',h.getAttribute('w'));});

define('alt-label',`:host{display:block;height:18px;background:#5b8c4f;border:1px solid #c8c8c8;color:#fff;font-size:14.500px;line-height:16px;padding-left:1px;-webkit-text-stroke:.4px #fff;flex:none}`,`<t-fit id="t"><slot></slot></t-fit>`,
(h,s)=>{const w=+h.getAttribute('w');h.style.width=w+'px';const t=s.getElementById('t');t.dataset.text=h.textContent;t.setAttribute('w',w-4);});

define('nav-button',`:host{display:flex;align-items:center;justify-content:center;width:110px;height:46px;border:1px solid #000;border-radius:5px;background:#fff;color:#000;font-size:11.500px;font-weight:700}
:host([active]){border:4px solid #fff;background:#305cb8;color:#fff}`,`<t-fit id="t"><slot></slot></t-fit>`,
(h,s)=>{const t=s.getElementById('t');t.dataset.text=h.textContent;t.setAttribute('w',h.getAttribute('w'));});

define('site-page',`:host{display:flex;flex-direction:column;width:1186px;background:#eee;color:#000}
.w{height:25px;background:#fff;display:flex;flex:none}.nv{justify-content:center;padding-left:1px}
header{height:60px;background:#243046;display:flex;align-items:flex-start;padding:0 12px 0 13px;flex:none}
.title{font-size:43px;line-height:61px;color:#fff;-webkit-text-stroke:.4px #fff}
.g{margin:6px 3px 0 auto;width:185px;height:40px;background:#4688f1;border:1px solid #4688f1;border-radius:2px;display:flex;align-items:center;color:#fff;font-size:14px;font-weight:700}
.g span{width:38px;height:38px;background:#fff;display:flex;align-items:center;justify-content:center;margin-right:11px}
nav{height:51px;background:#243046;display:flex;padding:5px 0 0 267px;gap:17px;flex:none}
.hero{height:245px;border-top:2px solid #000;border-bottom:2px solid #000;background:linear-gradient(#243046,#eee);padding:62px 0 0 455px;display:flex;align-items:flex-start;flex:none}
.hero .t{font-size:64px;line-height:84px;font-weight:700;margin-left:18px}
.h{display:flex;align-items:flex-start;flex:none;-webkit-text-stroke:.6px #000}.h b{color:#f00;font-weight:400;-webkit-text-stroke:.6px #f00}
.logos{display:flex;align-items:flex-end;margin-top:auto;padding-left:158px;height:140px;flex:none}
footer{height:59px;border-top:2px solid #000;background:linear-gradient(#243149,#22304a 50%,#243046);display:flex;align-items:flex-start;padding:0 10px;overflow:hidden;flex:none}
.cp{font-size:14px;font-weight:700;color:#fff;line-height:20px;margin-top:32px}
.go{margin:32px 0 0 auto;width:198px;height:40px;background:#00274c;border:1px solid #000;box-shadow:inset 0 1px #1d4166;border-radius:5px;display:flex;align-items:flex-start;padding:6px 0 0 11px;color:#ffcb05;font-size:14.500px}
.tm{font-size:6px;color:#777;margin:0 0 11px 2px;width:8px}`,
`<div class="w"><ui-icon n="head" w="25" h="25"></ui-icon></div>
<header><t-fit class="title" w="283">Ali Abdulhamid</t-fit><div class="g"><span><ui-icon n="google" w="18" h="18"></ui-icon></span><t-fit w="124">Sign in with Google</t-fit></div><ui-icon n="alt" w="25" h="25" style="margin-top:24px"></ui-icon><alt-label w="150" style="margin-top:20px">*Google Sign In Button*</alt-label><ui-icon n="mouse" w="25" h="25" style="margin-top:24px"></ui-icon></header>
<div class="w nv"><ui-icon n="navi" w="25" h="25"></ui-icon></div>
<nav><nav-button w="35">HOME</nav-button><nav-button w="40">ABOUT</nav-button><nav-button w="45">PLACES</nav-button><nav-button w="55" active>CONTACT</nav-button><nav-button w="72">GUESTBOOK</nav-button><ui-icon n="ulist" w="20" h="20" style="margin-left:-2px"></ui-icon></nav>
<div class="hero"><ui-icon n="h1" w="20" h="20" style="margin-top:55px"></ui-icon><t-fit class="t" w="238">Contact</t-fit></div>
<div class="h" style="padding:17px 0 0 286px;font-size:31px;line-height:40px"><ui-icon n="h2" w="20" h="20" style="margin-top:16px;-webkit-text-stroke:0"></ui-icon><t-fit w="584" style="margin-left:9px">You can e-mail me at <b>abdulali@umich.edu</b>.</t-fit></div>
<div class="h" style="padding:24px 0 0 399px;font-size:24px;line-height:32px"><ui-icon n="h3" w="20" h="20" style="margin-top:8px;-webkit-text-stroke:0"></ui-icon><t-fit w="361" style="margin-left:7px">I am also on the following sites...</t-fit></div>
<div class="logos"><ui-icon n="github" w="111" h="109"></ui-icon><ui-icon n="alt" w="25" h="25" style="margin-bottom:-2px"></ui-icon><alt-label w="87" style="margin-bottom:66px">*GitHub logo*</alt-label>
<ui-icon n="twitter" w="75" h="62" style="margin:0 0 23px 122px"></ui-icon><ui-icon n="alt" w="25" h="25" style="margin:0 0 -2px 18px"></ui-icon><alt-label w="81" style="margin-bottom:66px">*twitter logo*</alt-label>
<ui-icon n="linkedin" w="101" h="109" style="margin-left:101px"></ui-icon><span class="tm">TM</span><ui-icon n="alt" w="25" h="25" style="margin-bottom:-2px"></ui-icon><alt-label w="91" style="margin-bottom:66px">*linkedin logo*</alt-label></div>
<footer><t-fit class="cp" w="148">© 2016 Ali Abdulhamid</t-fit><ui-icon n="foot" w="25" h="25" style="margin-left:423px"></ui-icon><div class="go"><alt-label w="94">*role="button"*</alt-label><t-fit w="54" style="line-height:28px">Go Blue!</t-fit><ui-icon n="aria" w="25" h="25"></ui-icon></div></footer>`);

define('mac-dock',`:host{display:flex;width:1362px;height:62px;margin-left:39px;background:linear-gradient(90deg,#a8a27f,#9f9b76 15%,#aaa37c 40%,#a8a37c 60%,#b5a681 85%,#b7aa86);border-radius:4px 4px 0 0;padding-left:3.850px;flex:none;box-shadow:inset 0 1px rgba(255,255,255,.12)}
.sep{width:22.800px;display:flex;padding:8px 0 9px 12px}.sep::before{content:"";width:1px;background:#7f775a}`,
`<div style="display:contents" id="l"></div><div class="sep"></div><div style="display:contents" id="r"></div>`,
(h,s)=>{const run=['finder','spotify','chrome','acrobat','sublime','word','preview','term','gce'],k=Object.keys(DOCK);
 const mk=n=>`<dock-tile n="${n}"${run.includes(n)?' running':''}></dock-tile>`;
 s.getElementById('l').innerHTML=k.slice(0,24).map(mk).join('');s.getElementById('r').innerHTML=k.slice(24).map(mk).join('');});

define('dock-tile',`:host{display:block;width:49.300px;height:62px;flex:none;font-family:"Liberation Sans"}svg{display:block;overflow:visible}`,`<svg width="49.300" height="62"></svg>`,
(h,s)=>{s.querySelector('svg').innerHTML=`<g transform="translate(24.650 29.500)">${DOCK[h.getAttribute('n')]}</g>`+(h.hasAttribute('running')?'<circle cx="24.650" cy="58" r="2" fill="#25200f"/>':'');});

define('ui-icon',`:host{display:block;flex:none}svg{display:block}`,`<svg preserveAspectRatio="none"></svg>`,
(h,s)=>{const [v,b]=ICONS[h.getAttribute('n')],g=s.querySelector('svg');g.setAttribute('viewBox',v);g.setAttribute('width',h.getAttribute('w'));g.setAttribute('height',h.getAttribute('h'));g.innerHTML=b;});

/* Text run tracked to a given width. */
define('t-fit',`:host{display:block;white-space:nowrap;flex:none}span{display:inline-block}`,`<span><slot></slot></span>`,
(h,s)=>{const sp=s.querySelector('span'),w=+h.getAttribute('w'),n=(h.dataset.text||h.textContent).trim().length;
 const nat=sp.getBoundingClientRect().width;h.style.width=w+'px';sp.style.letterSpacing=((w-nat)/(n-1))+'px';});
</script>
</body>
</html>
